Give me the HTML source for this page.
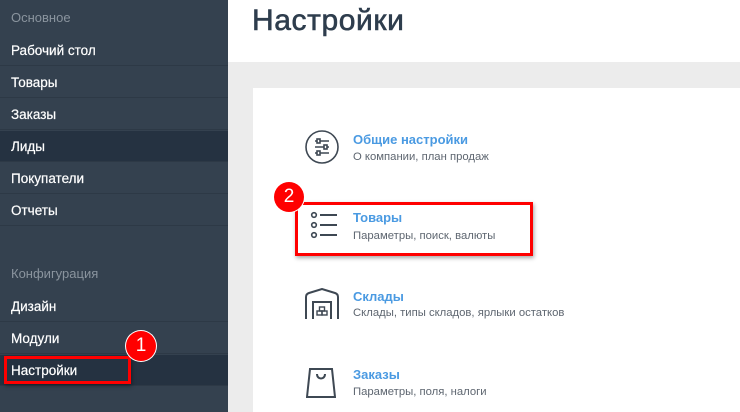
<!DOCTYPE html>
<html><head><meta charset="utf-8"><style>
body{margin:0;width:740px;height:412px;overflow:hidden;font-family:"Liberation Sans","DejaVu Sans",sans-serif;background:#ececec;position:relative}
.sb{position:absolute;left:0;top:0;width:228px;height:412px;background:#34414f}
.hd{position:absolute;left:11px;color:#8a949e;font-size:13px}
.it{position:absolute;left:0;width:228px;height:31px;line-height:31px;padding-left:11px;box-sizing:border-box;color:#fff;font-size:13.5px;border-bottom:1px solid #2d3946;-webkit-text-stroke:0.2px #fff}
.act{background:#253241}
.top{position:absolute;left:228px;top:0;width:512px;height:62px;background:#fff}
.title{position:absolute;left:252px;top:4px;font-size:30px;color:#2e3d4d;letter-spacing:0.6px;-webkit-text-stroke:0.6px #2e3d4d}
.card{position:absolute;left:253px;top:88px;width:487px;height:324px;background:#fff}
.n{position:absolute;left:353px;font-size:13px;font-weight:bold;color:#4a9ae2}
.d{position:absolute;left:353px;font-size:11.3px;color:#5e6670}
.rb{position:absolute;border:3px solid #f00;box-shadow:1px 2px 4px rgba(0,0,0,.35)}
.bd{position:absolute;width:30px;height:30px;border-radius:50%;background:#f00;color:#fff;font-size:19px;text-align:center;line-height:30px;box-shadow:0 0 0 1px #fff}
svg{position:absolute}
</style></head><body>
<div class="sb">
<div class="hd" style="top:10px">Основное</div>
<div class="it" style="top:35px">Рабочий стол</div>
<div class="it" style="top:67px">Товары</div>
<div class="it" style="top:99px">Заказы</div>
<div class="it act" style="top:131px">Лиды</div>
<div class="it" style="top:163px">Покупатели</div>
<div class="it" style="top:195px">Отчеты</div>
<div class="hd" style="top:266px">Конфигурация</div>
<div class="it" style="top:291px">Дизайн</div>
<div class="it" style="top:323px">Модули</div>
<div class="it act" style="top:355px">Настройки</div>
</div>
<div class="rb" style="left:4px;top:356px;width:121px;height:22px"></div>
<div class="bd" style="left:126px;top:331px">1</div>
<div class="top"></div>
<div class="title">Настройки</div>
<div class="card"></div>

<svg style="left:305px;top:130px" width="34" height="34" viewBox="0 0 34 34" fill="none" stroke="#3e4853" stroke-width="1.6">
<circle cx="17" cy="17" r="16"/>
<path d="M10 11h14M10 17h14M10 23h14"/>
<rect x="12" y="9" width="3" height="4" fill="#fff"/><rect x="19" y="15" width="3" height="4" fill="#fff"/><rect x="12" y="21" width="3" height="4" fill="#fff"/>
</svg>
<div class="n" style="top:132px">Общие настройки</div>
<div class="d" style="top:151px">О компании, план продаж</div>

<div class="rb" style="left:295px;top:202px;width:232px;height:48px"></div>
<div class="bd" style="left:274px;top:182px">2</div>
<svg style="left:310px;top:211px" width="28" height="28" viewBox="0 0 28 28" fill="none" stroke="#3e4853" stroke-width="1.6">
<circle cx="4" cy="4" r="2.3"/><circle cx="4" cy="14" r="2.3"/><circle cx="4" cy="24" r="2.3"/>
<path d="M10 4h17M10 14h17M10 24h17" stroke-width="2"/>
</svg>
<div class="n" style="top:210px">Товары</div>
<div class="d" style="top:230px">Параметры, поиск, валюты</div>

<svg style="left:305px;top:288px" width="34" height="32" viewBox="0 0 34 32" fill="none" stroke="#3e4853" stroke-width="2">
<path d="M1 31V9Q1 6 4 5L17 1L30 5Q33 6 33 9v22"/><path d="M8 31V14h18v17"/>
<rect x="12" y="23" width="5" height="4" stroke-width="1.4"/><rect x="17" y="23" width="5" height="4" stroke-width="1.4"/><rect x="14.5" y="19" width="5" height="4" stroke-width="1.4"/>
</svg>
<div class="n" style="top:289px">Склады</div>
<div class="d" style="top:307px">Склады, типы складов, ярлыки остатков</div>

<svg style="left:306px;top:367px" width="30" height="32" viewBox="0 0 30 32" fill="none" stroke="#3e4853" stroke-width="2">
<path d="M4 2h22l3 28H1z"/><path d="M11 7c0 6 8 6 8 0"/>
</svg>
<div class="n" style="top:367px">Заказы</div>
<div class="d" style="top:386px">Параметры, поля, налоги</div>
</body></html>
